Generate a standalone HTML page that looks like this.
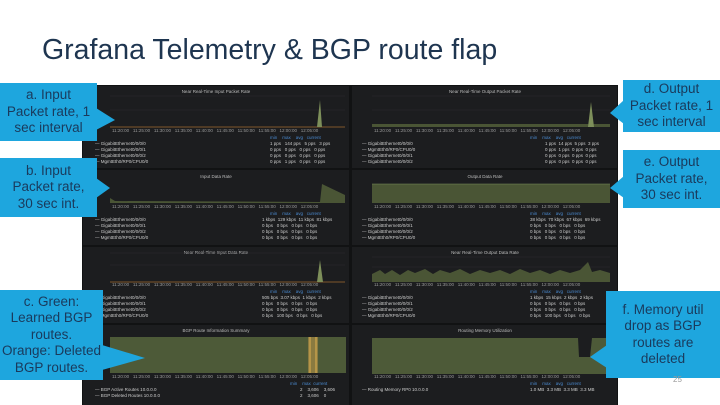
<!DOCTYPE html>
<html><head><meta charset="utf-8"><style>
body{margin:0;width:720px;height:405px;background:#fff;position:relative;overflow:hidden;font-family:"Liberation Sans",sans-serif}
.t{position:absolute;left:42px;top:34px;font-size:28.5px;color:#1e3550;white-space:nowrap}
.c{position:absolute;background:#1ea6de;color:#1a3a5c;font-size:13.5px;line-height:16.5px;text-align:center;display:flex;align-items:center;justify-content:center}
.pn{position:absolute;left:673px;top:375px;font-size:8px;color:#999}
svg text{white-space:pre}
</style></head><body>
<div class="t">Grafana Telemetry &amp; BGP route flap</div>
<svg style="position:absolute;left:0;top:0" width="720" height="405" font-family="Liberation Sans" font-size="4.5" fill="#aaa">
<rect x="82" y="85" width="536" height="320" fill="#111213"/>
<g fill="#1c1d1f">
<rect x="83" y="86" width="266" height="82"/><rect x="352" y="86" width="265" height="82"/>
<rect x="83" y="170" width="266" height="75"/><rect x="352" y="170" width="265" height="75"/>
<rect x="83" y="247" width="266" height="76"/><rect x="352" y="247" width="265" height="76"/>
<rect x="83" y="325" width="266" height="80"/><rect x="352" y="325" width="265" height="80"/>
</g>
<g fill="#bbb" text-anchor="middle">
<text x="216" y="93">Near Real-Time Input Packet Rate</text>
<text x="485" y="93">Near Real-Time Output Packet Rate</text>
<text x="216" y="178">Input Data Rate</text>
<text x="485" y="178">Output Data Rate</text>
<text x="216" y="254">Near Real-Time Input Data Rate</text>
<text x="485" y="254">Near Real-Time Output Data Rate</text>
<text x="216" y="332">BGP Route Information Summary</text>
<text x="485" y="332">Routing Memory Utilization</text>
</g>
<g stroke="#2c2d30" stroke-width="0.6">
<line x1="110" y1="96" x2="345" y2="96"/><line x1="110" y1="110" x2="345" y2="110"/>
<line x1="372" y1="96" x2="610" y2="96"/><line x1="372" y1="110" x2="610" y2="110"/>
<line x1="110" y1="253" x2="345" y2="253"/><line x1="110" y1="265" x2="345" y2="265"/>
<line x1="372" y1="257" x2="610" y2="257"/><line x1="372" y1="267" x2="610" y2="267"/>
</g>
<line x1="110" y1="127" x2="345" y2="127" stroke="#a06a30" stroke-width="0.8"/>
<path d="M317 127 L320 100 L322 127Z" fill="#7d8f5a"/>
<rect x="372" y="124" width="238" height="3" fill="#4a5535"/>
<path d="M588 127 L591 102 L594 127Z" fill="#7d8f5a"/>
<path d="M110 198 L115 201 L320 202 L322 184 L345 195 L345 203 L110 203Z" fill="#4a5535"/>
<rect x="372" y="184" width="238" height="19" fill="#4a5535"/>
<line x1="372" y1="184" x2="610" y2="184" stroke="#7d8f5a" stroke-width="0.6"/>
<line x1="110" y1="282" x2="345" y2="282" stroke="#a06a30" stroke-width="0.8"/>
<path d="M317 282 L320 260 L323 282Z" fill="#7d8f5a"/>
<path d="M372 282 L372 274 L380 270 L385 274 L392 270 L400 275 L408 270 L415 273 L425 269 L433 274 L440 270 L450 273 L460 269 L470 274 L480 270 L490 273 L500 270 L510 274 L520 269 L530 273 L540 270 L550 274 L560 270 L570 273 L580 270 L588 262 L592 272 L600 270 L610 273 L610 282Z" fill="#4a5535"/>
<rect x="110" y="337" width="236" height="36" fill="#4d5a38"/>
<rect x="308" y="337" width="10" height="36" fill="#8a7a40"/>
<line x1="310" y1="337" x2="310" y2="373" stroke="#e0b050" stroke-width="1"/>
<line x1="316" y1="337" x2="316" y2="373" stroke="#e0b050" stroke-width="1"/>
<path d="M372 338 L578 338 L579 357 L590 357 L592 338 L610 338 L610 374 L372 374Z" fill="#4d5a38"/>
<g fill="#999">
<text x="112" y="132">11:20:00   11:25:00   11:30:00   11:35:00   11:40:00   11:45:00   11:50:00   11:55:00   12:00:00   12:05:00</text>
<text x="374" y="132">11:20:00   11:25:00   11:30:00   11:35:00   11:40:00   11:45:00   11:50:00   11:55:00   12:00:00   12:05:00</text>
<text x="112" y="208">11:20:00   11:25:00   11:30:00   11:35:00   11:40:00   11:45:00   11:50:00   11:55:00   12:00:00   12:05:00</text>
<text x="374" y="208">11:20:00   11:25:00   11:30:00   11:35:00   11:40:00   11:45:00   11:50:00   11:55:00   12:00:00   12:05:00</text>
<text x="112" y="286">11:20:00   11:25:00   11:30:00   11:35:00   11:40:00   11:45:00   11:50:00   11:55:00   12:00:00   12:05:00</text>
<text x="374" y="286">11:20:00   11:25:00   11:30:00   11:35:00   11:40:00   11:45:00   11:50:00   11:55:00   12:00:00   12:05:00</text>
<text x="112" y="378">11:20:00   11:25:00   11:30:00   11:35:00   11:40:00   11:45:00   11:50:00   11:55:00   12:00:00   12:05:00</text>
<text x="374" y="378">11:20:00   11:25:00   11:30:00   11:35:00   11:40:00   11:45:00   11:50:00   11:55:00   12:00:00   12:05:00</text>
</g>
<g fill="#4a8ad0">
<text x="270" y="139">min    max    avg   current</text><text x="530" y="139">min    max    avg   current</text>
<text x="270" y="215">min    max    avg   current</text><text x="530" y="215">min    max    avg   current</text>
<text x="270" y="293">min    max    avg   current</text><text x="530" y="293">min    max    avg   current</text>
<text x="290" y="385">min    max  current</text><text x="530" y="385">min    max    avg   current</text>
</g>
<g fill="#ccc">
<text x="95" y="145">— GigabitEthernet0/0/0/0</text><text x="270" y="145">1 pps   144 pps   5 pps   3 pps</text>
<text x="95" y="151">— GigabitEthernet0/0/0/1</text><text x="270" y="151">0 pps   0 pps   0 pps   0 pps</text>
<text x="95" y="157">— GigabitEthernet0/0/0/2</text><text x="270" y="157">0 pps   0 pps   0 pps   0 pps</text>
<text x="95" y="163">— MgmtEth0/RP0/CPU0/0</text><text x="270" y="163">0 pps   1 pps   0 pps   0 pps</text>
<text x="362" y="145">— GigabitEthernet0/0/0/0</text><text x="545" y="145">1 pps  14 pps  5 pps  3 pps</text>
<text x="362" y="151">— MgmtEth0/RP0/CPU0/0</text><text x="545" y="151">0 pps  1 pps  0 pps  0 pps</text>
<text x="362" y="157">— GigabitEthernet0/0/0/1</text><text x="545" y="157">0 pps  0 pps  0 pps  0 pps</text>
<text x="362" y="163">— GigabitEthernet0/0/0/2</text><text x="545" y="163">0 pps  0 pps  0 pps  0 pps</text>
<text x="95" y="221">— GigabitEthernet0/0/0/0</text><text x="262" y="221">1 kbps  129 kbps  11 kbps  81 kbps</text>
<text x="95" y="227">— GigabitEthernet0/0/0/1</text><text x="262" y="227">0 bps   0 bps   0 bps   0 bps</text>
<text x="95" y="233">— GigabitEthernet0/0/0/2</text><text x="262" y="233">0 bps   0 bps   0 bps   0 bps</text>
<text x="95" y="239">— MgmtEth0/RP0/CPU0/0</text><text x="262" y="239">0 bps   0 bps   0 bps   0 bps</text>
<text x="362" y="221">— GigabitEthernet0/0/0/0</text><text x="530" y="221">38 kbps  70 kbps  67 kbps  69 kbps</text>
<text x="362" y="227">— GigabitEthernet0/0/0/1</text><text x="530" y="227">0 bps   0 bps   0 bps   0 bps</text>
<text x="362" y="233">— GigabitEthernet0/0/0/2</text><text x="530" y="233">0 bps   0 bps   0 bps   0 bps</text>
<text x="362" y="239">— MgmtEth0/RP0/CPU0/0</text><text x="530" y="239">0 bps   0 bps   0 bps   0 bps</text>
<text x="95" y="299">— GigabitEthernet0/0/0/0</text><text x="262" y="299">505 bps  3.07 kbps  1 kbps  2 kbps</text>
<text x="95" y="305">— GigabitEthernet0/0/0/1</text><text x="262" y="305">0 bps   0 bps   0 bps   0 bps</text>
<text x="95" y="311">— GigabitEthernet0/0/0/2</text><text x="262" y="311">0 bps   0 bps   0 bps   0 bps</text>
<text x="95" y="317">— MgmtEth0/RP0/CPU0/0</text><text x="262" y="317">0 bps   100 bps   0 bps   0 bps</text>
<text x="362" y="299">— GigabitEthernet0/0/0/0</text><text x="530" y="299">1 kbps  15 kbps  2 kbps  2 kbps</text>
<text x="362" y="305">— GigabitEthernet0/0/0/1</text><text x="530" y="305">0 bps   0 bps   0 bps   0 bps</text>
<text x="362" y="311">— GigabitEthernet0/0/0/2</text><text x="530" y="311">0 bps   0 bps   0 bps   0 bps</text>
<text x="362" y="317">— MgmtEth0/RP0/CPU0/0</text><text x="530" y="317">0 bps   100 bps   0 bps   0 bps</text>
<text x="95" y="391">— BGP Active Routes 10.0.0.0</text><text x="300" y="391">2    3,606    3,606</text>
<text x="95" y="397">— BGP Deleted Routes 10.0.0.0</text><text x="300" y="397">2    3,606    0</text>
<text x="362" y="391">— Routing Memory RP0 10.0.0.0</text><text x="530" y="391">1.0 MB  3.3 MB  3.3 MB  3.3 MB</text>
</g>
<g fill="#1ea6de">
<polygon points="96,108 115,120 96,130"/>
<polygon points="96,178 110,188 96,198"/>
<polygon points="102,345 145,358 102,370"/>
<polygon points="624,100 610,113 624,124"/>
<polygon points="624,176 610,188 624,198"/>
<polygon points="607,345 590,357 607,368"/>
</g>
</svg>
<div class="c" style="left:0;top:83px;width:97px;height:58px">a. Input<br>Packet rate, 1<br>sec interval</div>
<div class="c" style="left:0;top:158px;width:97px;height:59px">b. Input<br>Packet rate,<br>30 sec int.</div>
<div class="c" style="left:0;top:290px;width:103px;height:90px">c. Green:<br>Learned BGP<br>routes.<br>Orange: Deleted<br>BGP routes.</div>
<div class="c" style="left:623px;top:80px;width:97px;height:52px">d. Output<br>Packet rate, 1<br>sec interval</div>
<div class="c" style="left:623px;top:150px;width:97px;height:58px">e. Output<br>Packet rate,<br>30 sec int.</div>
<div class="c" style="left:606px;top:291px;width:114px;height:87px">f. Memory util<br>drop as BGP<br>routes are<br>deleted</div>
<div class="pn">25</div>
</body></html>
